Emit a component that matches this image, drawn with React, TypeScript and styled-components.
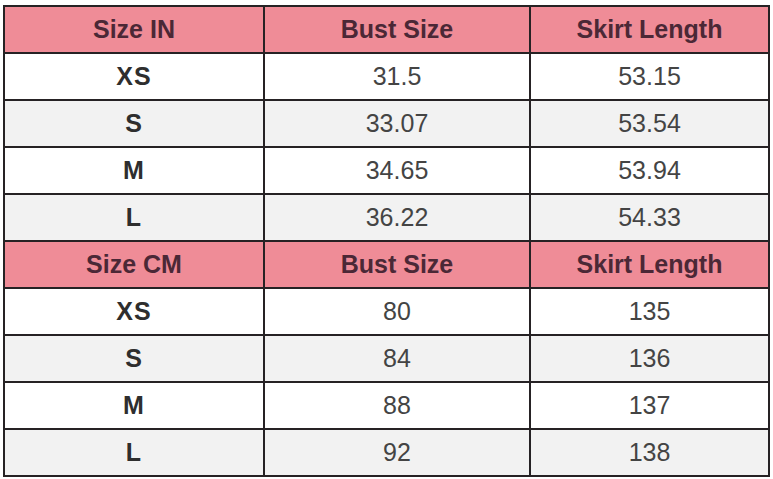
import React from "react";
import styled, { createGlobalStyle } from "styled-components";

const GlobalStyle = createGlobalStyle`
  html, body {
    margin: 0;
    padding: 0;
    background: #ffffff;
    font-family: "Liberation Sans", Arial, sans-serif;
  }
`;

const inchRows = [
  ["XS", "31.5", "53.15"],
  ["S", "33.07", "53.54"],
  ["M", "34.65", "53.94"],
  ["L", "36.22", "54.33"],
];

const cmRows = [
  ["XS", "80", "135"],
  ["S", "84", "136"],
  ["M", "88", "137"],
  ["L", "92", "138"],
];

function SizeChart() {
  const section = (label: string, rows: string[][]) => (
    <>
      <tr>
        <HeadCell>{label}</HeadCell>
        <HeadCell>Bust Size</HeadCell>
        <HeadCell>Skirt Length</HeadCell>
      </tr>
      {rows.map((r, i) => (
        <BodyRow key={label + r[0]} $shade={i % 2 === 1}>
          <SizeCell>{r[0]}</SizeCell>
          <ValueCell>{r[1]}</ValueCell>
          <ValueCell>{r[2]}</ValueCell>
        </BodyRow>
      ))}
    </>
  );

  return (
    <Wrapper>
      <Table>
        <colgroup>
          <col style={{ width: 260 }} />
          <col style={{ width: 266 }} />
          <col style={{ width: 239 }} />
        </colgroup>
        <tbody>
          {section("Size IN", inchRows)}
          {section("Size CM", cmRows)}
        </tbody>
      </Table>
    </Wrapper>
  );
}

export default function App() {
  return (
    <>
      <GlobalStyle />
      <SizeChart />
    </>
  );
}

const Wrapper = styled.div`
  padding: 5px 0 0 3px;
`;

const Table = styled.table`
  border-collapse: collapse;
  table-layout: fixed;
  width: 767px;
  border: 2px solid #262224;
`;

const Cell = styled.td`
  border: 2px solid #262224;
  height: 45px;
  padding: 0;
  text-align: center;
  vertical-align: middle;
  font-size: 25px;
  line-height: 1;
`;

const HeadCell = styled(Cell)`
  background: #ef8c97;
  color: #4b2836;
  font-weight: bold;
`;

const BodyRow = styled.tr<{ $shade: boolean }>`
  background: ${(p) => (p.$shade ? "#f2f2f2" : "#ffffff")};
`;

const SizeCell = styled(Cell)`
  color: #2e2e2e;
  font-weight: bold;
  letter-spacing: 1px;
`;

const ValueCell = styled(Cell)`
  color: #444444;
`;
